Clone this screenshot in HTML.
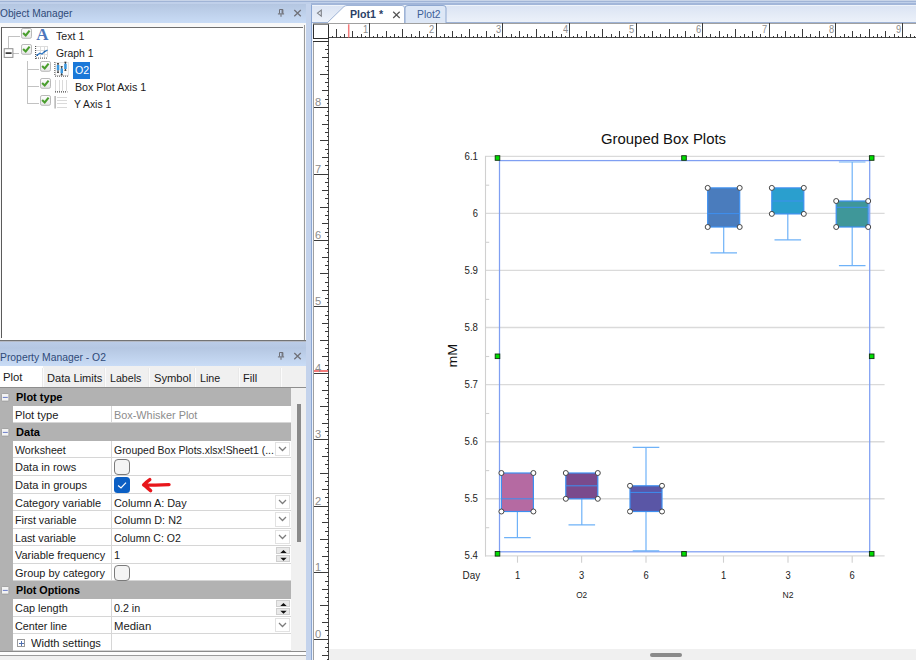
<!DOCTYPE html>
<html><head><meta charset="utf-8"><title>Grouped Box Plots</title>
<style>
html,body{margin:0;padding:0;}
body{width:916px;height:660px;overflow:hidden;background:#cbd9ee;font-family:"Liberation Sans",sans-serif;font-size:12px;color:#1a1a1a;}
#root{position:relative;width:916px;height:660px;overflow:hidden;background:#c6d5ec;}
.abs{position:absolute;}
.t{position:absolute;white-space:pre;transform-origin:0 50%;display:inline-block;}
.titlebar{position:absolute;left:0;width:306px;height:19px;background:linear-gradient(#b4c6e1,#c9dcf6);}
.row{position:absolute;left:0;width:291px;}
.cb{position:absolute;width:10px;height:9px;border:1px solid #b9b9b9;background:#fdfdfd;border-radius:1px;box-shadow:0 1px 0 #dcdcdc;}
</style></head><body><div id="root">

<div class="abs" style="left:0;top:0;width:916px;height:5px;background:#c0d0ea"></div>
<div class="abs" style="left:0;top:0;width:916px;height:1px;background:#c8d4e8"></div>
<div class="abs" style="left:0;top:1px;width:916px;height:1px;background:#a0b4d6"></div>
<div class="titlebar" style="top:4px"></div>
<span class="t" style="left:0.2px;top:8.2px;line-height:12px;font-size:10.3px;color:#2f4a78;transform:scaleX(0.988)">Object Manager</span>
<svg class="abs" style="left:270px;top:4px" width="36" height="19" viewBox="0 0 36 19">
<g stroke="#6f7078" fill="none">
<path d="M9.5 9.6 V5.5 H12.9 V9.6" stroke-width="1"/>
<path d="M12.2 5.5 V9.6" stroke-width="1.2"/>
<path d="M7.9 9.9 H14.1" stroke-width="1.1"/>
<path d="M11 10.2 V12.8" stroke-width="1.1"/>
</g>
<g stroke="#6f7078" stroke-width="1.25" fill="none"><path d="M24.3 6 L30.8 12.3 M30.8 6 L24.3 12.3"/></g>
</svg>
<div class="abs" style="left:0;top:23px;width:306px;height:318px;background:#f8f8f8"></div>
<div class="abs" style="left:2px;top:27px;width:301px;height:313px;background:#fff"></div>
<div class="abs" style="left:1px;top:27px;width:302px;height:1px;background:#6e6e6e"></div>
<div class="abs" style="left:1px;top:27px;width:1px;height:311px;background:#5a5a5a"></div>
<div class="abs" style="left:304px;top:25px;width:1px;height:316px;background:#9a9a9a"></div>
<div class="abs" style="left:0px;top:340px;width:306px;height:1px;background:#747474"></div>
<svg class="abs" style="left:0;top:27px" width="120" height="90" viewBox="0 27 120 90">
<g stroke="#c2c2c2" stroke-width="1" fill="none" shape-rendering="crispEdges">
<path d="M8.5 36 V48 M8.5 36.5 H20 M13 53.5 H19 M27.5 61 V104 M27.5 69.5 H39 M27.5 86.5 H39 M27.5 103.5 H39"/>
</g>
<rect x="4.2" y="48.7" width="8.7" height="8.7" fill="#fff" stroke="#8e8e8e" stroke-width="1"/>
<path d="M5.6 53.1 H11.6" stroke="#1a1a1a" stroke-width="1.5"/>
</svg>
<svg class="abs" style="left:20px;top:27px" width="14" height="14" viewBox="-1 -1 14 14"><defs><linearGradient id="cg21_28" x1="0" y1="0" x2="0" y2="1"><stop offset="0" stop-color="#ffffff"/><stop offset="1" stop-color="#e6e6e6"/></linearGradient></defs><rect x="0.5" y="0.5" width="10" height="9.8" rx="1.6" fill="url(#cg21_28)" stroke="#b9b9b9" stroke-width="1"/><path d="M2.1 4.9 L4.7 7.4 L8.6 2.6" fill="none" stroke="#4a9e2e" stroke-width="2.1"/></svg>
<svg class="abs" style="left:20px;top:43.3px" width="14" height="14" viewBox="-1 -1 14 14"><defs><linearGradient id="cg21_44.3" x1="0" y1="0" x2="0" y2="1"><stop offset="0" stop-color="#ffffff"/><stop offset="1" stop-color="#e6e6e6"/></linearGradient></defs><rect x="0.5" y="0.5" width="10" height="9.8" rx="1.6" fill="url(#cg21_44.3)" stroke="#b9b9b9" stroke-width="1"/><path d="M2.1 4.9 L4.7 7.4 L8.6 2.6" fill="none" stroke="#4a9e2e" stroke-width="2.1"/></svg>
<svg class="abs" style="left:39px;top:60.3px" width="14" height="14" viewBox="-1 -1 14 14"><defs><linearGradient id="cg40_61.3" x1="0" y1="0" x2="0" y2="1"><stop offset="0" stop-color="#ffffff"/><stop offset="1" stop-color="#e6e6e6"/></linearGradient></defs><rect x="0.5" y="0.5" width="10" height="9.8" rx="1.6" fill="url(#cg40_61.3)" stroke="#b9b9b9" stroke-width="1"/><path d="M2.1 4.9 L4.7 7.4 L8.6 2.6" fill="none" stroke="#4a9e2e" stroke-width="2.1"/></svg>
<svg class="abs" style="left:39px;top:77.2px" width="14" height="14" viewBox="-1 -1 14 14"><defs><linearGradient id="cg40_78.2" x1="0" y1="0" x2="0" y2="1"><stop offset="0" stop-color="#ffffff"/><stop offset="1" stop-color="#e6e6e6"/></linearGradient></defs><rect x="0.5" y="0.5" width="10" height="9.8" rx="1.6" fill="url(#cg40_78.2)" stroke="#b9b9b9" stroke-width="1"/><path d="M2.1 4.9 L4.7 7.4 L8.6 2.6" fill="none" stroke="#4a9e2e" stroke-width="2.1"/></svg>
<svg class="abs" style="left:39px;top:94.1px" width="14" height="14" viewBox="-1 -1 14 14"><defs><linearGradient id="cg40_95.1" x1="0" y1="0" x2="0" y2="1"><stop offset="0" stop-color="#ffffff"/><stop offset="1" stop-color="#e6e6e6"/></linearGradient></defs><rect x="0.5" y="0.5" width="10" height="9.8" rx="1.6" fill="url(#cg40_95.1)" stroke="#b9b9b9" stroke-width="1"/><path d="M2.1 4.9 L4.7 7.4 L8.6 2.6" fill="none" stroke="#4a9e2e" stroke-width="2.1"/></svg>
<span class="abs" style="left:36.2px;top:26px;font-family:'Liberation Serif',serif;font-size:17px;line-height:17px;color:#4d76bc;font-weight:bold;">A</span>
<svg class="abs" style="left:35px;top:45px" width="15" height="16" viewBox="0 0 15 16">
<g shape-rendering="crispEdges" stroke="#dcdcdc" fill="none"><path d="M1 5.5 H13 M5.5 1 V12 M9.5 1 V12 M1 1.5 H13 M12.5 1 V12 M1 9.5 H13"/></g>
<g stroke="#444" fill="none" stroke-dasharray="1 1"><path d="M0.6 1 V14 M1 13.1 H13"/></g>
<path d="M2 10.2 L4.8 8.2 L7 9 L9.6 6.6 L12.6 5" stroke="#2f78c4" stroke-width="1.3" fill="none"/>
<circle cx="2.2" cy="10.2" r="0.9" fill="#1f5fa8"/><circle cx="9.6" cy="6.6" r="0.8" fill="#1f5fa8"/>
</svg>
<svg class="abs" style="left:54px;top:61px" width="16" height="17" viewBox="54 61 16 17">
<rect x="55.5" y="62.5" width="13" height="13" fill="#fbfbfb" stroke="#e4e4e4" stroke-width="1"/>
<g stroke="#555" fill="none" stroke-dasharray="1 1"><path d="M54.8 62 V76 M55 76.2 H68.5"/></g>
<g stroke="#333" stroke-width="1" fill="none"><path d="M58 63.5 V72.5 M61.7 66.5 V75 M65.4 62 V70.5 M57 63.7 H59 M57 72.3 H59 M60.7 66.7 H62.7 M60.7 74.8 H62.7 M64.4 62.2 H66.4 M64.4 70.3 H66.4"/></g>
<g fill="#3a98e0"><rect x="56.8" y="65" width="2.5" height="5.2"/><rect x="60.5" y="68.5" width="2.5" height="4.8"/><rect x="64.2" y="63.7" width="2.5" height="5.3"/></g>
</svg>
<svg class="abs" style="left:54px;top:79px" width="16" height="16" viewBox="54 79 16 16">
<g shape-rendering="crispEdges" stroke="#dadada" fill="none"><path d="M55.5 80 V91 M59.5 80 V91 M62.5 80 V91 M66.5 80 V91"/></g>
<g stroke="#444" fill="none" stroke-dasharray="1 1" stroke-width="1.2"><path d="M55 91.9 H67.4"/></g>
</svg>
<svg class="abs" style="left:54px;top:95px" width="16" height="16" viewBox="54 95 16 16">
<g shape-rendering="crispEdges" stroke="#dadada" fill="none"><path d="M57 97.5 H67 M57 100.5 H67 M57 103.5 H67 M57 107.5 H67"/></g>
<g stroke="#444" fill="none" stroke-dasharray="1 1" stroke-width="1.2"><path d="M55.1 96.6 V108.8"/></g>
</svg>
<span class="t" style="left:55.8px;top:30.9px;line-height:12px;font-size:10.3px;color:#1a1a1a;transform:scaleX(1.033)">Text 1</span>
<span class="t" style="left:55.8px;top:47.9px;line-height:12px;font-size:10.3px;color:#1a1a1a;transform:scaleX(1.008)">Graph 1</span>
<div class="abs" style="left:73px;top:61.5px;width:17px;height:17px;background:#1a78d8"></div>
<span class="t" style="left:74.9px;top:64.9px;line-height:12px;font-size:10.3px;color:#fff;transform:scaleX(1.033)">O2</span>
<span class="t" style="left:74.9px;top:81.9px;line-height:12px;font-size:10.3px;color:#1a1a1a;transform:scaleX(1.037)">Box Plot Axis 1</span>
<span class="t" style="left:74.4px;top:98.9px;line-height:12px;font-size:10.3px;color:#1a1a1a;transform:scaleX(1.005)">Y Axis 1</span>
<div class="abs" style="left:0;top:341px;width:306px;height:1px;background:#b4b9c4"></div>
<div class="titlebar" style="top:342px;height:24px;background:linear-gradient(#bbcce7 0%,#b5c7e2 25%,#c9dcf6 100%)"></div>
<span class="t" style="left:0.4px;top:351.9px;line-height:12px;font-size:10.3px;color:#2f4a78;transform:scaleX(1.006)">Property Manager - O2</span>
<svg class="abs" style="left:270px;top:347px" width="36" height="19" viewBox="0 0 36 19">
<g stroke="#6f7078" fill="none">
<path d="M9.5 9.6 V5.5 H12.9 V9.6" stroke-width="1"/>
<path d="M12.2 5.5 V9.6" stroke-width="1.2"/>
<path d="M7.9 9.9 H14.1" stroke-width="1.1"/>
<path d="M11 10.2 V12.8" stroke-width="1.1"/>
</g>
<g stroke="#6f7078" stroke-width="1.25" fill="none"><path d="M24.3 6 L30.8 12.3 M30.8 6 L24.3 12.3"/></g>
</svg>
<div class="abs" style="left:0;top:366px;width:306px;height:294px;background:#f0f0f0"></div>
<div class="abs" style="left:0;top:366px;width:43px;height:21px;background:#fff"></div>
<span class="t" style="left:2.9px;top:371.5px;line-height:12px;font-size:10.3px;color:#1a1a1a;transform:scaleX(1.099)">Plot</span>
<span class="t" style="left:46.9px;top:372.5px;line-height:12px;font-size:10.3px;color:#1a1a1a;transform:scaleX(1.076)">Data Limits</span>
<span class="t" style="left:110.3px;top:372.5px;line-height:12px;font-size:10.3px;color:#1a1a1a;transform:scaleX(1.035)">Labels</span>
<span class="t" style="left:153.8px;top:372.5px;line-height:12px;font-size:10.3px;color:#1a1a1a;transform:scaleX(1.086)">Symbol</span>
<span class="t" style="left:199.7px;top:372.5px;line-height:12px;font-size:10.3px;color:#1a1a1a;transform:scaleX(1.038)">Line</span>
<span class="t" style="left:243.4px;top:372.5px;line-height:12px;font-size:10.3px;color:#1a1a1a;transform:scaleX(1.072)">Fill</span>
<div class="abs" style="left:43px;top:368px;width:1px;height:19px;background:#fbfbfb"></div>
<div class="abs" style="left:42px;top:368px;width:1px;height:19px;background:#e9e9e9"></div>
<div class="abs" style="left:105px;top:368px;width:1px;height:19px;background:#fbfbfb"></div>
<div class="abs" style="left:104px;top:368px;width:1px;height:19px;background:#e9e9e9"></div>
<div class="abs" style="left:149px;top:368px;width:1px;height:19px;background:#fbfbfb"></div>
<div class="abs" style="left:148px;top:368px;width:1px;height:19px;background:#e9e9e9"></div>
<div class="abs" style="left:195px;top:368px;width:1px;height:19px;background:#fbfbfb"></div>
<div class="abs" style="left:194px;top:368px;width:1px;height:19px;background:#e9e9e9"></div>
<div class="abs" style="left:239px;top:368px;width:1px;height:19px;background:#fbfbfb"></div>
<div class="abs" style="left:238px;top:368px;width:1px;height:19px;background:#e9e9e9"></div>
<div class="abs" style="left:281px;top:368px;width:1px;height:19px;background:#fbfbfb"></div>
<div class="abs" style="left:280px;top:368px;width:1px;height:19px;background:#e9e9e9"></div>
<div class="abs" style="left:0;top:388px;width:291px;height:263px;background:#fff"></div>
<div class="abs" style="left:0;top:388px;width:13px;height:263px;background:#b2b2b2"></div>
<div class="row" style="top:388px;height:18px;background:#b2b2b2"><svg class="abs" style="left:0.8px;top:5px" width="10" height="10"><rect x="0.5" y="0.5" width="7.4" height="7.6" rx="0.8" fill="#f3f3f3" stroke="#9e9e9e" stroke-width="0.9"/><path d="M1.8 4.4 H6.8" stroke="#6a7cc8" stroke-width="1"/></svg></div>
<span class="t" style="left:15.6px;top:392.4px;line-height:12px;font-size:10.3px;font-weight:bold;color:#000;transform:scaleX(1.069)">Plot type</span>
<div class="row" style="top:406px;height:17px;"><div class="abs" style="left:13px;top:16px;width:278px;height:1px;background:#d6d6d6"></div><div class="abs" style="left:111px;top:0;width:1px;height:17px;background:#d6d6d6"></div></div>
<span class="t" style="left:15.4px;top:409.9px;line-height:12px;font-size:10.3px;color:#1a1a1a;transform:scaleX(1.083)">Plot type</span>
<span class="t" style="left:114.0px;top:409.9px;line-height:12px;font-size:10.3px;color:#8c8c8c;transform:scaleX(1.056)">Box-Whisker Plot</span>
<div class="row" style="top:423px;height:18px;background:#b2b2b2"><svg class="abs" style="left:0.8px;top:5px" width="10" height="10"><rect x="0.5" y="0.5" width="7.4" height="7.6" rx="0.8" fill="#f3f3f3" stroke="#9e9e9e" stroke-width="0.9"/><path d="M1.8 4.4 H6.8" stroke="#6a7cc8" stroke-width="1"/></svg></div>
<span class="t" style="left:15.6px;top:427.4px;line-height:12px;font-size:10.3px;font-weight:bold;color:#000;transform:scaleX(1.075)">Data</span>
<div class="row" style="top:441px;height:17px;"><div class="abs" style="left:13px;top:16px;width:278px;height:1px;background:#d6d6d6"></div><div class="abs" style="left:111px;top:0;width:1px;height:17px;background:#d6d6d6"></div><div class="abs" style="left:275px;top:1px;width:15px;height:14px;border:1px solid #e2e2e2;box-sizing:border-box;background:#fff"></div><svg class="abs" style="left:278px;top:5px" width="10" height="7"><path d="M1 1 L4.5 4.5 L8 1" fill="none" stroke="#7c7c7c" stroke-width="1.25"/></svg></div>
<span class="t" style="left:15.4px;top:444.9px;line-height:12px;font-size:10.3px;color:#1a1a1a;transform:scaleX(1.034)">Worksheet</span>
<span class="t" style="left:114.0px;top:444.9px;line-height:12px;font-size:10.3px;color:#1a1a1a;transform:scaleX(1.016)">Grouped Box Plots.xlsx!Sheet1 (...</span>
<div class="row" style="top:458px;height:18px;"><div class="abs" style="left:13px;top:17px;width:278px;height:1px;background:#d6d6d6"></div><div class="abs" style="left:111px;top:0;width:1px;height:18px;background:#d6d6d6"></div><div class="abs" style="left:114px;top:1px;width:16px;height:16px;border:1px solid #7a7a7a;border-radius:4px;box-sizing:border-box;background:#f4f4f4"></div></div>
<span class="t" style="left:15.4px;top:462.4px;line-height:12px;font-size:10.3px;color:#1a1a1a;transform:scaleX(1.069)">Data in rows</span>
<div class="row" style="top:476px;height:18px;"><div class="abs" style="left:13px;top:17px;width:278px;height:1px;background:#d6d6d6"></div><div class="abs" style="left:111px;top:0;width:1px;height:18px;background:#d6d6d6"></div><div class="abs" style="left:114px;top:1px;width:16px;height:16px;border-radius:3.5px;background:#0b5fc4"></div><svg class="abs" style="left:114px;top:1px" width="16" height="16"><path d="M4.1 8.5 L7 11 L12 5.6" fill="none" stroke="#fff" stroke-width="1.2"/></svg><svg class="abs" style="left:139px;top:0px" width="36" height="18" viewBox="139 476 36 18"><g fill="none" stroke="#e8161b" stroke-width="3.4" stroke-linecap="round" stroke-linejoin="round"><path d="M144.5 485 C152 485.4 161 484.8 169 484.6 M149.8 479.6 C147 481.5 145.5 483 143.6 484.9 C146 486.5 148 488.5 150.6 490.6"/></g></svg></div>
<span class="t" style="left:15.4px;top:480.4px;line-height:12px;font-size:10.3px;color:#1a1a1a;transform:scaleX(1.075)">Data in groups</span>
<div class="row" style="top:494px;height:17px;"><div class="abs" style="left:13px;top:16px;width:278px;height:1px;background:#d6d6d6"></div><div class="abs" style="left:111px;top:0;width:1px;height:17px;background:#d6d6d6"></div><div class="abs" style="left:275px;top:1px;width:15px;height:14px;border:1px solid #e2e2e2;box-sizing:border-box;background:#fff"></div><svg class="abs" style="left:278px;top:5px" width="10" height="7"><path d="M1 1 L4.5 4.5 L8 1" fill="none" stroke="#7c7c7c" stroke-width="1.25"/></svg></div>
<span class="t" style="left:15.4px;top:497.9px;line-height:12px;font-size:10.3px;color:#1a1a1a;transform:scaleX(1.066)">Category variable</span>
<span class="t" style="left:114.0px;top:497.9px;line-height:12px;font-size:10.3px;color:#1a1a1a;transform:scaleX(1.057)">Column A: Day</span>
<div class="row" style="top:511px;height:18px;"><div class="abs" style="left:13px;top:17px;width:278px;height:1px;background:#d6d6d6"></div><div class="abs" style="left:111px;top:0;width:1px;height:18px;background:#d6d6d6"></div><div class="abs" style="left:275px;top:1px;width:15px;height:15px;border:1px solid #e2e2e2;box-sizing:border-box;background:#fff"></div><svg class="abs" style="left:278px;top:5px" width="10" height="7"><path d="M1 1 L4.5 4.5 L8 1" fill="none" stroke="#7c7c7c" stroke-width="1.25"/></svg></div>
<span class="t" style="left:15.4px;top:515.4px;line-height:12px;font-size:10.3px;color:#1a1a1a;transform:scaleX(1.043)">First variable</span>
<span class="t" style="left:114.0px;top:515.4px;line-height:12px;font-size:10.3px;color:#1a1a1a;transform:scaleX(1.051)">Column D: N2</span>
<div class="row" style="top:529px;height:17px;"><div class="abs" style="left:13px;top:16px;width:278px;height:1px;background:#d6d6d6"></div><div class="abs" style="left:111px;top:0;width:1px;height:17px;background:#d6d6d6"></div><div class="abs" style="left:275px;top:1px;width:15px;height:14px;border:1px solid #e2e2e2;box-sizing:border-box;background:#fff"></div><svg class="abs" style="left:278px;top:5px" width="10" height="7"><path d="M1 1 L4.5 4.5 L8 1" fill="none" stroke="#7c7c7c" stroke-width="1.25"/></svg></div>
<span class="t" style="left:15.4px;top:532.9px;line-height:12px;font-size:10.3px;color:#1a1a1a;transform:scaleX(1.045)">Last variable</span>
<span class="t" style="left:114.0px;top:532.9px;line-height:12px;font-size:10.3px;color:#1a1a1a;transform:scaleX(1.025)">Column C: O2</span>
<div class="row" style="top:546px;height:18px;"><div class="abs" style="left:13px;top:17px;width:278px;height:1px;background:#d6d6d6"></div><div class="abs" style="left:111px;top:0;width:1px;height:18px;background:#d6d6d6"></div><div class="abs" style="left:276px;top:1px;width:14px;height:7px;border:1px solid #cfcfcf;box-sizing:border-box;background:#e9e9e9"></div><div class="abs" style="left:276px;top:9px;width:14px;height:7px;border:1px solid #cfcfcf;box-sizing:border-box;background:#e9e9e9"></div><svg class="abs" style="left:279.5px;top:2.5px" width="8" height="13"><path d="M0.3 4 L3.5 1 L6.7 4 Z M0.3 8.8 L3.5 11.8 L6.7 8.8 Z" fill="#111"/></svg></div>
<span class="t" style="left:15.4px;top:550.4px;line-height:12px;font-size:10.3px;color:#1a1a1a;transform:scaleX(1.061)">Variable frequency</span>
<span class="t" style="left:114.0px;top:550.4px;line-height:12px;font-size:10.3px;color:#1a1a1a;transform:scaleX(1.064)">1</span>
<div class="row" style="top:564px;height:17px;"><div class="abs" style="left:13px;top:16px;width:278px;height:1px;background:#d6d6d6"></div><div class="abs" style="left:111px;top:0;width:1px;height:17px;background:#d6d6d6"></div><div class="abs" style="left:114px;top:1px;width:16px;height:16px;border:1px solid #7a7a7a;border-radius:4px;box-sizing:border-box;background:#f4f4f4"></div></div>
<span class="t" style="left:15.4px;top:567.9px;line-height:12px;font-size:10.3px;color:#1a1a1a;transform:scaleX(1.061)">Group by category</span>
<div class="row" style="top:581px;height:18px;background:#b2b2b2"><svg class="abs" style="left:0.8px;top:5px" width="10" height="10"><rect x="0.5" y="0.5" width="7.4" height="7.6" rx="0.8" fill="#f3f3f3" stroke="#9e9e9e" stroke-width="0.9"/><path d="M1.8 4.4 H6.8" stroke="#6a7cc8" stroke-width="1"/></svg></div>
<span class="t" style="left:15.6px;top:585.4px;line-height:12px;font-size:10.3px;font-weight:bold;color:#000;transform:scaleX(1.046)">Plot Options</span>
<div class="row" style="top:599px;height:18px;"><div class="abs" style="left:13px;top:17px;width:278px;height:1px;background:#d6d6d6"></div><div class="abs" style="left:111px;top:0;width:1px;height:18px;background:#d6d6d6"></div><div class="abs" style="left:276px;top:1px;width:14px;height:7px;border:1px solid #cfcfcf;box-sizing:border-box;background:#e9e9e9"></div><div class="abs" style="left:276px;top:9px;width:14px;height:7px;border:1px solid #cfcfcf;box-sizing:border-box;background:#e9e9e9"></div><svg class="abs" style="left:279.5px;top:2.5px" width="8" height="13"><path d="M0.3 4 L3.5 1 L6.7 4 Z M0.3 8.8 L3.5 11.8 L6.7 8.8 Z" fill="#111"/></svg></div>
<span class="t" style="left:15.4px;top:603.4px;line-height:12px;font-size:10.3px;color:#1a1a1a;transform:scaleX(1.060)">Cap length</span>
<span class="t" style="left:114.0px;top:603.4px;line-height:12px;font-size:10.3px;color:#1a1a1a;transform:scaleX(1.040)">0.2 in</span>
<div class="row" style="top:617px;height:17px;"><div class="abs" style="left:13px;top:16px;width:278px;height:1px;background:#d6d6d6"></div><div class="abs" style="left:111px;top:0;width:1px;height:17px;background:#d6d6d6"></div><div class="abs" style="left:275px;top:1px;width:15px;height:14px;border:1px solid #e2e2e2;box-sizing:border-box;background:#fff"></div><svg class="abs" style="left:278px;top:5px" width="10" height="7"><path d="M1 1 L4.5 4.5 L8 1" fill="none" stroke="#7c7c7c" stroke-width="1.25"/></svg></div>
<span class="t" style="left:15.4px;top:620.9px;line-height:12px;font-size:10.3px;color:#1a1a1a;transform:scaleX(1.046)">Center line</span>
<span class="t" style="left:114.0px;top:620.9px;line-height:12px;font-size:10.3px;color:#1a1a1a;transform:scaleX(1.101)">Median</span>
<div class="row" style="top:634px;height:17px;"><div class="abs" style="left:13px;top:16px;width:278px;height:1px;background:#d6d6d6"></div><div class="abs" style="left:111px;top:0;width:1px;height:17px;background:#d6d6d6"></div><svg class="abs" style="left:17px;top:5px" width="9" height="9" shape-rendering="crispEdges"><rect x="0.5" y="0.5" width="7" height="7" fill="#fff" stroke="#9a9a9a"/><path d="M2 4.5 H7 M4.5 2 V7" stroke="#5070b0"/></svg></div>
<span class="t" style="left:30.7px;top:637.9px;line-height:12px;font-size:10.3px;color:#1a1a1a;transform:scaleX(1.081)">Width settings</span>
<div class="abs" style="left:0;top:651px;width:306px;height:9px;background:#f0f0f0"></div>
<div class="abs" style="left:0;top:651px;width:306px;height:1px;background:#8c8c8c"></div>
<div class="abs" style="left:0;top:652px;width:306px;height:3px;background:#fdfdfd"></div>
<div class="abs" style="left:0;top:655px;width:306px;height:1px;background:#9c9c9c"></div>
<div class="abs" style="left:0;top:387px;width:306px;height:1px;background:#8e8e8e"></div>
<div class="abs" style="left:291px;top:388px;width:15px;height:263px;background:#f0f0f0"></div>
<div class="abs" style="left:297px;top:404px;width:4px;height:138px;background:#8a8a8a;"></div>
<div class="abs" style="left:306px;top:4px;width:6px;height:656px;background:#c4d3ec"></div>
<div class="abs" style="left:311px;top:4px;width:1px;height:656px;background:#8ba6d2"></div>
<div class="abs" style="left:312px;top:4px;width:1px;height:656px;background:#eef3fb"></div>
<div class="abs" style="left:312px;top:5px;width:604px;height:18px;background:linear-gradient(#dae3f3,#edf2fa)"></div>
<div class="abs" style="left:311px;top:3px;width:605px;height:2px;background:#a2b6d9"></div>
<div class="abs" style="left:312px;top:5px;width:604px;height:1px;background:#eef3fa"></div>
<div class="abs" style="left:312px;top:22px;width:604px;height:1px;background:#9eb3d6"></div>
<svg class="abs" style="left:313px;top:4px" width="140" height="20" viewBox="313 4 140 20">
<path d="M317.4 13.1 L321.3 10.1 V16.2 Z" fill="#e4e8f0" stroke="#7d8087" stroke-width="1.1"/>
<path d="M405 23.5 V8 Q405 5.5 408 5.5 H443 Q446 5.5 446 8 V23.5 Z" fill="#dde7f6" stroke="#8fa8d0" stroke-width="1"/>
<path d="M326 24 L344 6.5 Q345.5 5.5 347 5.5 H402 Q404.5 5.5 404.5 8 V24 Z" fill="#fff" stroke="#9fb4d6" stroke-width="1"/>
<path d="M393.2 11.7 L399.7 18 M399.7 11.7 L393.2 18" stroke="#555" stroke-width="1.2" fill="none"/>
</svg>
<span class="t" style="left:350.2px;top:8.8px;line-height:12px;font-size:10.3px;font-weight:bold;color:#2c3f66;transform:scaleX(1.033)">Plot1 *</span>
<span class="t" style="left:416.5px;top:8.8px;line-height:12px;font-size:10.3px;color:#3d5f96;transform:scaleX(1.005)">Plot2</span>
<div class="abs" style="left:313px;top:23px;width:603px;height:16px;background:#fff"></div>
<div class="abs" style="left:313px;top:23px;width:16px;height:637px;background:#fff"></div>
<div class="abs" style="left:329px;top:38px;width:587px;height:611px;background:#fff"></div>
<svg class="abs" style="left:313px;top:23px" width="603" height="16" viewBox="313 23 603 16" shape-rendering="crispEdges"><path d="M313 23.5 H916" stroke="#a0a0a0"/><path d="M328 37.5 H916" stroke="#4a4a4a"/><path d="M332.5 36 V38 M336.5 29 V38 M340.5 36 V38 M344.5 34 V38 M348.5 36 V38 M352.5 31 V38 M357.5 36 V38 M361.5 34 V38 M365.5 36 V38 M369.5 23 V38 M373.5 36 V38 M377.5 34 V38 M382.5 36 V38 M386.5 31 V38 M390.5 36 V38 M394.5 34 V38 M398.5 36 V38 M402.5 29 V38 M406.5 36 V38 M411.5 34 V38 M415.5 36 V38 M419.5 31 V38 M423.5 36 V38 M427.5 34 V38 M431.5 36 V38 M436.5 23 V38 M440.5 36 V38 M444.5 34 V38 M448.5 36 V38 M452.5 31 V38 M456.5 36 V38 M461.5 34 V38 M465.5 36 V38 M469.5 29 V38 M473.5 36 V38 M477.5 34 V38 M481.5 36 V38 M486.5 31 V38 M490.5 36 V38 M494.5 34 V38 M498.5 36 V38 M502.5 23 V38 M506.5 36 V38 M511.5 34 V38 M515.5 36 V38 M519.5 31 V38 M523.5 36 V38 M527.5 34 V38 M531.5 36 V38 M536.5 29 V38 M540.5 36 V38 M544.5 34 V38 M548.5 36 V38 M552.5 31 V38 M556.5 36 V38 M561.5 34 V38 M565.5 36 V38 M569.5 23 V38 M573.5 36 V38 M577.5 34 V38 M581.5 36 V38 M586.5 31 V38 M590.5 36 V38 M594.5 34 V38 M598.5 36 V38 M602.5 29 V38 M606.5 36 V38 M611.5 34 V38 M615.5 36 V38 M619.5 31 V38 M623.5 36 V38 M627.5 34 V38 M631.5 36 V38 M636.5 23 V38 M640.5 36 V38 M644.5 34 V38 M648.5 36 V38 M652.5 31 V38 M656.5 36 V38 M660.5 34 V38 M665.5 36 V38 M669.5 29 V38 M673.5 36 V38 M677.5 34 V38 M681.5 36 V38 M685.5 31 V38 M690.5 36 V38 M694.5 34 V38 M698.5 36 V38 M702.5 23 V38 M706.5 36 V38 M710.5 34 V38 M715.5 36 V38 M719.5 31 V38 M723.5 36 V38 M727.5 34 V38 M731.5 36 V38 M735.5 29 V38 M740.5 36 V38 M744.5 34 V38 M748.5 36 V38 M752.5 31 V38 M756.5 36 V38 M760.5 34 V38 M765.5 36 V38 M769.5 23 V38 M773.5 36 V38 M777.5 34 V38 M781.5 36 V38 M785.5 31 V38 M790.5 36 V38 M794.5 34 V38 M798.5 36 V38 M802.5 29 V38 M806.5 36 V38 M810.5 34 V38 M815.5 36 V38 M819.5 31 V38 M823.5 36 V38 M827.5 34 V38 M831.5 36 V38 M835.5 23 V38 M840.5 36 V38 M844.5 34 V38 M848.5 36 V38 M852.5 31 V38 M856.5 36 V38 M860.5 34 V38 M865.5 36 V38 M869.5 29 V38 M873.5 36 V38 M877.5 34 V38 M881.5 36 V38 M885.5 31 V38 M889.5 36 V38 M894.5 34 V38 M898.5 36 V38 M902.5 23 V38 M906.5 36 V38 M910.5 34 V38 M914.5 36 V38 " stroke="#3a3a3a"/></svg>
<svg class="abs" style="left:346px;top:24px" width="6" height="14" viewBox="346 24 6 14"><path d="M348.7 24.3 V37.6" stroke="#f47a7a" stroke-width="1.5"/></svg>
<span class="t" style="left:362.6px;top:24.0px;line-height:12px;font-size:10.2px;color:#8c8c8c;transform:scaleX(0.917)">1</span>
<span class="t" style="left:429.2px;top:24.0px;line-height:12px;font-size:10.2px;color:#8c8c8c;transform:scaleX(0.917)">2</span>
<span class="t" style="left:495.9px;top:24.0px;line-height:12px;font-size:10.2px;color:#8c8c8c;transform:scaleX(0.917)">3</span>
<span class="t" style="left:562.5px;top:24.0px;line-height:12px;font-size:10.2px;color:#8c8c8c;transform:scaleX(0.917)">4</span>
<span class="t" style="left:629.1px;top:24.0px;line-height:12px;font-size:10.2px;color:#8c8c8c;transform:scaleX(0.917)">5</span>
<span class="t" style="left:695.7px;top:24.0px;line-height:12px;font-size:10.2px;color:#8c8c8c;transform:scaleX(0.917)">6</span>
<span class="t" style="left:762.3px;top:24.0px;line-height:12px;font-size:10.2px;color:#8c8c8c;transform:scaleX(0.917)">7</span>
<span class="t" style="left:829.0px;top:24.0px;line-height:12px;font-size:10.2px;color:#8c8c8c;transform:scaleX(0.917)">8</span>
<span class="t" style="left:895.6px;top:24.0px;line-height:12px;font-size:10.2px;color:#8c8c8c;transform:scaleX(0.917)">9</span>
<div class="abs" style="left:313px;top:24px;width:16px;height:15px;border:1px solid #2e2e2e;border-top-color:#888;box-sizing:border-box;background:#fff"></div>
<svg class="abs" style="left:313px;top:38px" width="16" height="622" viewBox="313 38 16 622" shape-rendering="crispEdges"><path d="M313.5 41 V660" stroke="#a0a0a0"/><path d="M328.5 39 V660" stroke="#4a4a4a"/><path d="M327 659.5 H329 M322 655.5 H329 M327 651.5 H329 M325 647.5 H329 M327 643.5 H329 M314 639.5 H329 M327 635.5 H329 M325 630.5 H329 M327 626.5 H329 M322 622.5 H329 M327 618.5 H329 M325 614.5 H329 M327 610.5 H329 M320 605.5 H329 M327 601.5 H329 M325 597.5 H329 M327 593.5 H329 M322 589.5 H329 M327 585.5 H329 M325 581.5 H329 M327 576.5 H329 M314 572.5 H329 M327 568.5 H329 M325 564.5 H329 M327 560.5 H329 M322 556.5 H329 M327 551.5 H329 M325 547.5 H329 M327 543.5 H329 M320 539.5 H329 M327 535.5 H329 M325 531.5 H329 M327 527.5 H329 M322 522.5 H329 M327 518.5 H329 M325 514.5 H329 M327 510.5 H329 M314 506.5 H329 M327 502.5 H329 M325 497.5 H329 M327 493.5 H329 M322 489.5 H329 M327 485.5 H329 M325 481.5 H329 M327 477.5 H329 M320 473.5 H329 M327 468.5 H329 M325 464.5 H329 M327 460.5 H329 M322 456.5 H329 M327 452.5 H329 M325 448.5 H329 M327 444.5 H329 M314 439.5 H329 M327 435.5 H329 M325 431.5 H329 M327 427.5 H329 M322 423.5 H329 M327 419.5 H329 M325 414.5 H329 M327 410.5 H329 M320 406.5 H329 M327 402.5 H329 M325 398.5 H329 M327 394.5 H329 M322 390.5 H329 M327 385.5 H329 M325 381.5 H329 M327 377.5 H329 M314 373.5 H329 M327 369.5 H329 M325 365.5 H329 M327 360.5 H329 M322 356.5 H329 M327 352.5 H329 M325 348.5 H329 M327 344.5 H329 M320 340.5 H329 M327 336.5 H329 M325 331.5 H329 M327 327.5 H329 M322 323.5 H329 M327 319.5 H329 M325 315.5 H329 M327 311.5 H329 M314 306.5 H329 M327 302.5 H329 M325 298.5 H329 M327 294.5 H329 M322 290.5 H329 M327 286.5 H329 M325 282.5 H329 M327 277.5 H329 M320 273.5 H329 M327 269.5 H329 M325 265.5 H329 M327 261.5 H329 M322 257.5 H329 M327 252.5 H329 M325 248.5 H329 M327 244.5 H329 M314 240.5 H329 M327 236.5 H329 M325 232.5 H329 M327 228.5 H329 M322 223.5 H329 M327 219.5 H329 M325 215.5 H329 M327 211.5 H329 M320 207.5 H329 M327 203.5 H329 M325 198.5 H329 M327 194.5 H329 M322 190.5 H329 M327 186.5 H329 M325 182.5 H329 M327 178.5 H329 M314 174.5 H329 M327 169.5 H329 M325 165.5 H329 M327 161.5 H329 M322 157.5 H329 M327 153.5 H329 M325 149.5 H329 M327 144.5 H329 M320 140.5 H329 M327 136.5 H329 M325 132.5 H329 M327 128.5 H329 M322 124.5 H329 M327 120.5 H329 M325 115.5 H329 M327 111.5 H329 M314 107.5 H329 M327 103.5 H329 M325 99.5 H329 M327 95.5 H329 M322 90.5 H329 M327 86.5 H329 M325 82.5 H329 M327 78.5 H329 M320 74.5 H329 M327 70.5 H329 M325 66.5 H329 M327 61.5 H329 M322 57.5 H329 M327 53.5 H329 M325 49.5 H329 M327 45.5 H329 " stroke="#3a3a3a"/><path d="M313 41.5 H329" stroke="#2e2e2e"/></svg>
<div class="abs" style="left:314px;top:370px;width:14px;height:2px;background:#f47a7a"></div>
<span class="t" style="left:314.8px;top:627.6px;line-height:13px;font-size:10.6px;color:#8c8c8c;transform:scaleX(1.050)">0</span>
<span class="t" style="left:314.8px;top:561.2px;line-height:13px;font-size:10.6px;color:#8c8c8c;transform:scaleX(1.050)">1</span>
<span class="t" style="left:314.8px;top:494.7px;line-height:13px;font-size:10.6px;color:#8c8c8c;transform:scaleX(1.050)">2</span>
<span class="t" style="left:314.8px;top:428.3px;line-height:13px;font-size:10.6px;color:#8c8c8c;transform:scaleX(1.050)">3</span>
<span class="t" style="left:314.8px;top:361.8px;line-height:13px;font-size:10.6px;color:#8c8c8c;transform:scaleX(1.050)">4</span>
<span class="t" style="left:314.8px;top:295.4px;line-height:13px;font-size:10.6px;color:#8c8c8c;transform:scaleX(1.050)">5</span>
<span class="t" style="left:314.8px;top:228.9px;line-height:13px;font-size:10.6px;color:#8c8c8c;transform:scaleX(1.050)">6</span>
<span class="t" style="left:314.8px;top:162.5px;line-height:13px;font-size:10.6px;color:#8c8c8c;transform:scaleX(1.050)">7</span>
<span class="t" style="left:314.8px;top:96.0px;line-height:13px;font-size:10.6px;color:#8c8c8c;transform:scaleX(1.050)">8</span>
<div class="abs" style="left:329px;top:649px;width:587px;height:11px;background:#f0f0f0"></div>
<div class="abs" style="left:650px;top:653px;width:32px;height:4px;background:#8a8a8a;border-radius:2px"></div>
<svg class="abs" style="left:329px;top:38px" width="587" height="611" viewBox="329 38 587 611" font-family="Liberation Sans, sans-serif"><g stroke="#dadada" stroke-width="1.35" fill="none"><path d="M485 555.8 H884.6"/><path d="M485 498.7 H884.6"/><path d="M485 441.7 H884.6"/><path d="M485 384.6 H884.6"/><path d="M485 327.5 H884.6"/><path d="M485 270.4 H884.6"/><path d="M485 213.4 H884.6"/><path d="M485 156.3 H884.6"/></g><g stroke="#d0d0d0" stroke-width="1.1" fill="none"><path d="M485.5 156 V556.4"/><path d="M485 527.7 H489.2"/><path d="M485 470.6 H489.2"/><path d="M485 413.5 H489.2"/><path d="M485 356.5 H489.2"/><path d="M485 299.4 H489.2"/><path d="M485 242.3 H489.2"/><path d="M485 185.2 H489.2"/><path d="M517.5 556 V562.7"/><path d="M581.6 556 V562.7"/><path d="M646.0 556 V562.7"/><path d="M723.5 556 V562.7"/><path d="M788.0 556 V562.7"/><path d="M852.2 556 V562.7"/></g><text x="464.6" y="559.1" font-size="10.1" textLength="13.4" lengthAdjust="spacingAndGlyphs" fill="#222">5.4</text><text x="464.6" y="502.0" font-size="10.1" textLength="13.4" lengthAdjust="spacingAndGlyphs" fill="#222">5.5</text><text x="464.6" y="445.0" font-size="10.1" textLength="13.4" lengthAdjust="spacingAndGlyphs" fill="#222">5.6</text><text x="464.6" y="387.9" font-size="10.1" textLength="13.4" lengthAdjust="spacingAndGlyphs" fill="#222">5.7</text><text x="464.6" y="330.8" font-size="10.1" textLength="13.4" lengthAdjust="spacingAndGlyphs" fill="#222">5.8</text><text x="464.6" y="273.7" font-size="10.1" textLength="13.4" lengthAdjust="spacingAndGlyphs" fill="#222">5.9</text><text x="472.8" y="216.7" font-size="10.1" textLength="5.2" lengthAdjust="spacingAndGlyphs" fill="#222">6</text><text x="464.6" y="159.6" font-size="10.1" textLength="13.4" lengthAdjust="spacingAndGlyphs" fill="#222">6.1</text><text x="601" y="144" font-size="15.2" textLength="125" lengthAdjust="spacingAndGlyphs" fill="#111">Grouped Box Plots</text><text transform="translate(457.1,367.5) rotate(-90)" font-size="13.4" textLength="23.6" lengthAdjust="spacingAndGlyphs" fill="#111">mM</text><text x="462.5" y="578.6" font-size="10.2" textLength="17.6" lengthAdjust="spacingAndGlyphs" fill="#222">Day</text><text x="517.5" y="579.3" font-size="10" textLength="5.2" lengthAdjust="spacingAndGlyphs" text-anchor="middle" fill="#222">1</text><text x="581.5" y="579.3" font-size="10" textLength="5.2" lengthAdjust="spacingAndGlyphs" text-anchor="middle" fill="#222">3</text><text x="646" y="579.3" font-size="10" textLength="5.2" lengthAdjust="spacingAndGlyphs" text-anchor="middle" fill="#222">6</text><text x="723.5" y="579.3" font-size="10" textLength="5.2" lengthAdjust="spacingAndGlyphs" text-anchor="middle" fill="#222">1</text><text x="788" y="579.3" font-size="10" textLength="5.2" lengthAdjust="spacingAndGlyphs" text-anchor="middle" fill="#222">3</text><text x="852" y="579.3" font-size="10" textLength="5.2" lengthAdjust="spacingAndGlyphs" text-anchor="middle" fill="#222">6</text><text x="576.2" y="598.2" font-size="8.2" textLength="11" lengthAdjust="spacingAndGlyphs" fill="#222">O2</text><text x="782.5" y="598.2" font-size="8.2" textLength="11" lengthAdjust="spacingAndGlyphs" fill="#222">N2</text><rect x="499.5" y="160.6" width="370.2" height="391.2" fill="none" stroke="#7f9ff2" stroke-width="1.25"/><path d="M517.4 511.5 V537.6 M504.09999999999997 537.6 H530.6999999999999" stroke="#6fb2f8" stroke-width="1.2" fill="none"/><rect x="501.4" y="473" width="32" height="38.5" fill="#b56aa2" stroke="#3d8ff0" stroke-width="1.2"/><path d="M501.4 498.8 H533.4" stroke="#3d8ff0" stroke-width="1"/><circle cx="501.4" cy="473" r="2.5" fill="#fff" stroke="#333" stroke-width="0.9"/><circle cx="501.4" cy="511.5" r="2.5" fill="#fff" stroke="#333" stroke-width="0.9"/><circle cx="533.4" cy="473" r="2.5" fill="#fff" stroke="#333" stroke-width="0.9"/><circle cx="533.4" cy="511.5" r="2.5" fill="#fff" stroke="#333" stroke-width="0.9"/><path d="M581.8 498.8 V524.8 M568.5 524.8 H595.0999999999999" stroke="#6fb2f8" stroke-width="1.2" fill="none"/><rect x="565.8" y="473" width="32" height="25.8" fill="#7a4a8c" stroke="#3d8ff0" stroke-width="1.2"/><path d="M565.8 485.8 H597.8" stroke="#3d8ff0" stroke-width="1"/><circle cx="565.8" cy="473" r="2.5" fill="#fff" stroke="#333" stroke-width="0.9"/><circle cx="565.8" cy="498.8" r="2.5" fill="#fff" stroke="#333" stroke-width="0.9"/><circle cx="597.8" cy="473" r="2.5" fill="#fff" stroke="#333" stroke-width="0.9"/><circle cx="597.8" cy="498.8" r="2.5" fill="#fff" stroke="#333" stroke-width="0.9"/><path d="M646.0 485.8 V447.3 M632.7 447.3 H659.3" stroke="#6fb2f8" stroke-width="1.2" fill="none"/><path d="M646.0 511.5 V550.9 M632.7 550.9 H659.3" stroke="#6fb2f8" stroke-width="1.2" fill="none"/><rect x="630.0" y="485.8" width="32" height="25.7" fill="#5a56a6" stroke="#3d8ff0" stroke-width="1.2"/><path d="M630.0 492.4 H662.0" stroke="#3d8ff0" stroke-width="1"/><circle cx="630.0" cy="485.8" r="2.5" fill="#fff" stroke="#333" stroke-width="0.9"/><circle cx="630.0" cy="511.5" r="2.5" fill="#fff" stroke="#333" stroke-width="0.9"/><circle cx="662.0" cy="485.8" r="2.5" fill="#fff" stroke="#333" stroke-width="0.9"/><circle cx="662.0" cy="511.5" r="2.5" fill="#fff" stroke="#333" stroke-width="0.9"/><path d="M723.7 227 V252.9 M710.4000000000001 252.9 H737.0" stroke="#6fb2f8" stroke-width="1.2" fill="none"/><rect x="707.7" y="187.9" width="32" height="39.1" fill="#4a7cbd" stroke="#3d8ff0" stroke-width="1.2"/><path d="M707.7 213.6 H739.7" stroke="#3d8ff0" stroke-width="1"/><circle cx="707.7" cy="187.9" r="2.5" fill="#fff" stroke="#333" stroke-width="0.9"/><circle cx="707.7" cy="227" r="2.5" fill="#fff" stroke="#333" stroke-width="0.9"/><circle cx="739.7" cy="187.9" r="2.5" fill="#fff" stroke="#333" stroke-width="0.9"/><circle cx="739.7" cy="227" r="2.5" fill="#fff" stroke="#333" stroke-width="0.9"/><path d="M787.8 213.9 V239.8 M774.5 239.8 H801.0999999999999" stroke="#6fb2f8" stroke-width="1.2" fill="none"/><rect x="771.8" y="187.9" width="32" height="26.0" fill="#2a9fce" stroke="#3d8ff0" stroke-width="1.2"/><path d="M771.8 201 H803.8" stroke="#3d8ff0" stroke-width="1"/><circle cx="771.8" cy="187.9" r="2.5" fill="#fff" stroke="#333" stroke-width="0.9"/><circle cx="771.8" cy="213.9" r="2.5" fill="#fff" stroke="#333" stroke-width="0.9"/><circle cx="803.8" cy="187.9" r="2.5" fill="#fff" stroke="#333" stroke-width="0.9"/><circle cx="803.8" cy="213.9" r="2.5" fill="#fff" stroke="#333" stroke-width="0.9"/><path d="M852.2 201 V162 M838.9000000000001 162 H865.5" stroke="#6fb2f8" stroke-width="1.2" fill="none"/><path d="M852.2 227 V265.7 M838.9000000000001 265.7 H865.5" stroke="#6fb2f8" stroke-width="1.2" fill="none"/><rect x="836.2" y="201" width="32" height="26.0" fill="#3f9799" stroke="#3d8ff0" stroke-width="1.2"/><path d="M836.2 207.3 H868.2" stroke="#3d8ff0" stroke-width="1"/><circle cx="836.2" cy="201" r="2.5" fill="#fff" stroke="#333" stroke-width="0.9"/><circle cx="836.2" cy="227" r="2.5" fill="#fff" stroke="#333" stroke-width="0.9"/><circle cx="868.2" cy="201" r="2.5" fill="#fff" stroke="#333" stroke-width="0.9"/><circle cx="868.2" cy="227" r="2.5" fill="#fff" stroke="#333" stroke-width="0.9"/><rect x="495.2" y="155.7" width="4.6" height="4.6" fill="#00de00" stroke="#10300f" stroke-width="0.9"/><rect x="681.7" y="155.7" width="4.6" height="4.6" fill="#00de00" stroke="#10300f" stroke-width="0.9"/><rect x="869.4000000000001" y="155.7" width="4.6" height="4.6" fill="#00de00" stroke="#10300f" stroke-width="0.9"/><rect x="495.2" y="354.0" width="4.6" height="4.6" fill="#00de00" stroke="#10300f" stroke-width="0.9"/><rect x="869.4000000000001" y="354.0" width="4.6" height="4.6" fill="#00de00" stroke="#10300f" stroke-width="0.9"/><rect x="495.2" y="551.5" width="4.6" height="4.6" fill="#00de00" stroke="#10300f" stroke-width="0.9"/><rect x="681.7" y="551.5" width="4.6" height="4.6" fill="#00de00" stroke="#10300f" stroke-width="0.9"/><rect x="869.4000000000001" y="551.5" width="4.6" height="4.6" fill="#00de00" stroke="#10300f" stroke-width="0.9"/></svg>
</div></body></html>
